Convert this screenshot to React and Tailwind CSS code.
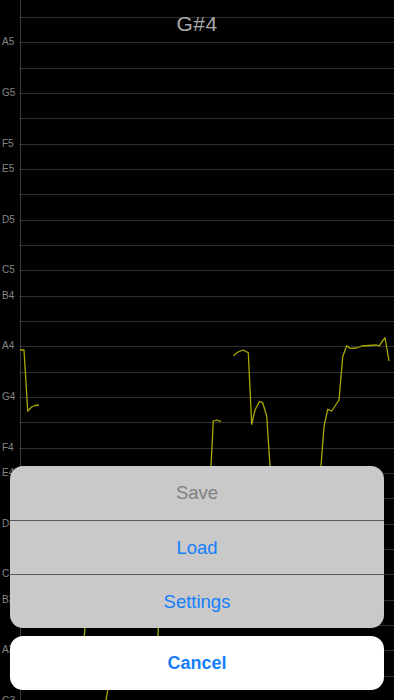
import React from 'react';

const STEP = 76 / 3;
const TOP = 42.33;

const lineY = (k) => Math.round(TOP + STEP * k) + 0.5;

const labels = [
  ['A5', 0], ['G5', 2], ['F5', 4], ['E5', 5], ['D5', 7], ['C5', 9], ['B4', 10],
  ['A4', 12], ['G4', 14], ['F4', 16], ['E4', 17], ['D4', 19], ['C4', 21],
  ['B3', 22], ['A3', 24], ['G3', 26],
];

const curves = [
  '20,350 24,350 27.7,411 31.7,407 35,405.5 39,405',
  '210,480 211,466 213.3,421 216.7,420 221,421.7',
  '233.3,355.7 238,352 243.3,350 248.3,352.7 251.7,424.3 255,410 259.3,401.7 262.7,402.7 266.7,416 270,465.7 272,490',
  '320,490 321,465.7 324,426.7 327.7,409.3 331.7,411 339,400 342.7,356.7 346.7,345.7 350,348.3 356.7,348 361.7,346 376.7,345 379,346 385,337.7 389,361',
  '86,600 85,628 84.3,636 83,660',
  '159,600 158.3,628 158,636 157,660',
  '110,670 107.7,690 106,700',
];

const Chart = () => {
  const ks = [];
  for (let k = -1; k <= 26; k++) ks.push(k);
  return (
    <svg className="absolute inset-0" width="394" height="700" viewBox="0 0 394 700">
      {ks.map((k) => (
        <line key={k} x1="19" x2="394" y1={lineY(k)} y2={lineY(k)} stroke="#2f2f2f" strokeWidth="1" />
      ))}
      <line x1="20.5" x2="20.5" y1="0" y2="700" stroke="#3c3c3c" strokeWidth="1" />
      {curves.map((pts, i) => (
        <polyline key={i} points={pts} fill="none" stroke="#a9a900" strokeWidth="1.3" strokeLinejoin="round" />
      ))}
    </svg>
  );
};

const App = () => {
  return (
    <div className="relative w-[394px] h-[700px] bg-black overflow-hidden" style={{ fontFamily: '"Liberation Sans", Arial, sans-serif' }}>
      <Chart />

      {/* note labels */}
      {labels.map(([name, k]) => (
        <span
          key={name}
          className="absolute left-[2px] -translate-y-1/2 text-[10px] leading-none text-[#858585]"
          style={{ top: TOP + STEP * k }}
        >
          {name}
        </span>
      ))}

      <div className="relative h-[48px] flex items-center justify-center">
        <span className="text-[21px] text-[#a9a9a9] tracking-[0.5px]">G#4</span>
      </div>

      {/* action sheet */}
      <div className="absolute left-0 right-0 bottom-0 px-[10px] pb-[10px] flex flex-col gap-[8px]">
        <div className="rounded-[13px] bg-[#c9c9c9] overflow-hidden flex flex-col">
          <div className="h-[54px] flex items-center justify-center text-[18.5px] text-[#808080]">Save</div>
          <div className="h-[54px] flex items-center justify-center border-t border-[#5c5c5c] text-[18.5px] text-[#157efb]">Load</div>
          <div className="h-[54px] flex items-center justify-center border-t border-[#5c5c5c] text-[18.5px] text-[#157efb]">Settings</div>
        </div>
        <div className="h-[54px] rounded-[13px] bg-white flex items-center justify-center text-[18px] font-bold text-[#157efb]">
          Cancel
        </div>
      </div>
    </div>
  );
};

export default App;
